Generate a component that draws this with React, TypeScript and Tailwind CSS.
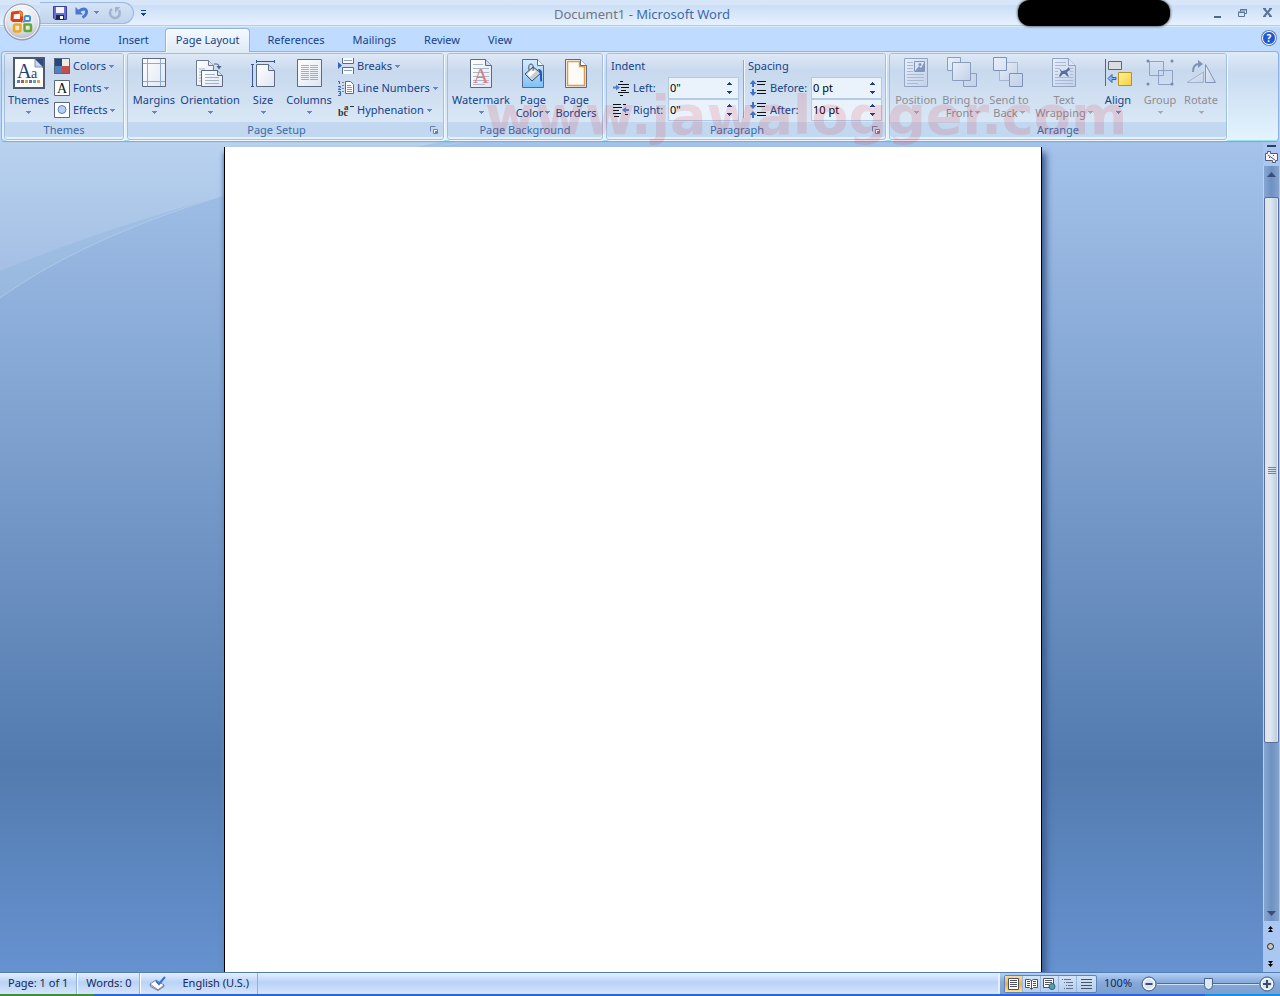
import type { ReactNode } from "react";

const viewModes = ["Print Layout", "Full Screen Reading", "Web Layout", "Outline", "Draft"] as const;

function Arrow({ className = "text-[#6788be]" }: { className?: string }) {
  return (
    <svg width="5" height="3" viewBox="0 0 5 3" className={`shrink-0 ${className}`}>
      <path d="M0 0h5v1H4v1H3v1H2V2H1V1H0z" fill="currentColor" shapeRendering="crispEdges" />
    </svg>
  );
}

/* ---------- large ribbon icons, 32x32 ---------- */

function Gradients() {
  return (
    <svg width="0" height="0" className="absolute">
      <defs>
        <linearGradient id="paper" x1="0" y1="0" x2="1" y2="1">
          <stop offset="0" stopColor="#fff" />
          <stop offset="1" stopColor="#dfe6f2" />
        </linearGradient>
        <linearGradient id="ghost" x1="0" y1="0" x2="1" y2="1">
          <stop offset="0" stopColor="#e6eef9" />
          <stop offset="1" stopColor="#c3d1e8" />
        </linearGradient>
        <linearGradient id="gold" x1="0" y1="0" x2="1" y2="1">
          <stop offset="0" stopColor="#fff3a0" />
          <stop offset="1" stopColor="#f5cf3d" />
        </linearGradient>
        <linearGradient id="sky" x1="0" y1="0" x2="0" y2="1">
          <stop offset="0" stopColor="#d5ecff" />
          <stop offset="1" stopColor="#7fc0f8" />
        </linearGradient>
        <radialGradient id="orb" cx=".5" cy=".3" r=".75">
          <stop offset="0" stopColor="#ffffff" />
          <stop offset=".6" stopColor="#dfe2ea" />
          <stop offset="1" stopColor="#a2aabd" />
        </radialGradient>
      </defs>
    </svg>
  );
}

function Icon({ children, size = 32 }: { children: ReactNode; size?: number }) {
  return (
    <svg width={size} height={size} viewBox={`0 0 ${size} ${size}`} className="shrink-0">
      {children}
    </svg>
  );
}

function ThemesIcon() {
  return (
    <Icon>
      <path d="M1 1h30v30H1z" fill="#fff" stroke="#4f5a6e" strokeWidth="2" />
      <path d="M22 2h8v9z" fill="#2b4a86" />
      <path d="M22 2v8h8z" fill="#c9d8ef" stroke="#5b6f97" strokeWidth=".7" />
      <text x="4" y="21" fontSize="20" fill="#1f4178" className="font-['Liberation_Serif',serif]">A</text>
      <text x="18" y="21" fontSize="14" fill="#1f4178" className="font-['Liberation_Serif',serif]">a</text>
      <path d="M4 23h3v3H4z" fill="#4f81bd" />
      <path d="M8 23h3v3H8z" fill="#c0504d" />
      <path d="M12 23h3v3h-3z" fill="#9bbb59" />
      <path d="M16 23h3v3h-3z" fill="#8064a2" />
      <path d="M20 23h3v3h-3z" fill="#4bacc6" />
      <path d="M24 23h3v3h-3z" fill="#f79646" />
    </Icon>
  );
}

function MarginsIcon() {
  return (
    <Icon>
      <path d="M4.500 1.500h23v28h-23z" fill="url(#paper)" stroke="#5b6b87" />
      <path d="M9.500 2v27M22.500 2v27M5 6.500h22M5 24.500h22" stroke="#8eabd6" />
    </Icon>
  );
}

function OrientationIcon() {
  return (
    <Icon>
      <path d="M2.500 3.500h12l5 5v20h-17z" fill="url(#paper)" stroke="#6b7a96" />
      <path d="M14.500 3.500v5h5" fill="#d6e0f0" stroke="#6b7a96" />
      <path d="M5 12h6M5 15h6M5 18h6M5 21h6M5 24h6" stroke="#9fb0cc" />
      <path d="M7.500 13.500h16l5 5v11h-21z" fill="url(#paper)" stroke="#5b6b87" />
      <path d="M23.500 13.500v5h5" fill="#d6e0f0" stroke="#5b6b87" />
      <path d="M11 17.500h10M11 20.500h14M11 23.500h14M11 26.500h14" stroke="#9fb0cc" />
      <path d="M20 7h3q2 0 2 3" fill="none" stroke="#4b6289" />
      <path d="M22.500 9h5L25 12.500z" fill="#4b6289" />
    </Icon>
  );
}

function SizeIcon() {
  return (
    <Icon>
      <path d="M9.500 7.500h12l6 6v16h-18z" fill="url(#paper)" stroke="#5b6b87" />
      <path d="M21.500 7.500v6h6" fill="#cfdcef" stroke="#5b6b87" />
      <path d="M9 4.500h19M9.500 3v3M27.500 3v3M5.500 7v22M4 7.500h3M4 29.500h3" stroke="#3a55a0" />
    </Icon>
  );
}

function ColumnsIcon() {
  return (
    <Icon>
      <path d="M4.500 2.500h24v27h-24z" fill="url(#paper)" stroke="#5b6b87" />
      <path
        d="M8 8.500h8M8 10.500h8M8 12.500h8M8 14.500h8M8 16.500h8M8 18.500h8M8 20.500h8M8 22.500h8M17 8.500h8M17 10.500h8M17 12.500h8M17 14.500h8M17 16.500h8M17 18.500h8M17 20.500h8M17 22.500h8"
        stroke="#a3aec2"
      />
    </Icon>
  );
}

function WatermarkIcon() {
  return (
    <Icon>
      <path d="M5.500 2.500h15l6 6v22h-21z" fill="url(#paper)" stroke="#5b6b87" />
      <path d="M20.500 2.500v6h6" fill="#cfdcef" stroke="#5b6b87" />
      <path d="M8 7.500h10M8 11.500h16M8 15.500h16M8 19.500h16M8 23.500h16M8 27.500h12" stroke="#a9b6cc" />
      <text x="8" y="26" fontSize="22" fill="#db7d7a" className="font-['Liberation_Serif',serif]">A</text>
    </Icon>
  );
}

function PageColorIcon() {
  return (
    <Icon>
      <path d="M5.500 2.500h15l6 6v22h-21z" fill="url(#sky)" stroke="#5b6b87" />
      <path d="M20.500 2.500v6h6" fill="#fff" stroke="#5b6b87" />
      <path d="m8 17 8-7 8 6-9 8z" fill="#c9cdd4" stroke="#4a4f59" />
      <path d="m10 17 6-5 3 2-6 6z" fill="#fff" />
      <path d="M12 13q-1-6 2-6t2 7" fill="none" stroke="#4a4f59" />
      <path d="M21 12q4 0 4 4v8q-2 2-2-2v-5z" fill="#2458b8" />
    </Icon>
  );
}

function PageBordersIcon() {
  return (
    <Icon>
      <path d="M5.500 2.500h15l6 6v22h-21z" fill="url(#paper)" stroke="#5b6b87" />
      <path d="M7.500 4.500h12v5h5v19h-17z" fill="#fdfbf8" stroke="#e59a45" strokeWidth="1.500" />
      <path d="M20.500 2.500v6h6" fill="#fff" stroke="#5b6b87" />
    </Icon>
  );
}

function PositionIcon() {
  return (
    <Icon>
      <path d="M4.500 1.500h23v28h-23z" fill="url(#ghost)" stroke="#93a5c4" />
      <path d="M7 5.500h6M7 8.500h6M7 11.500h6M7 14.500h6M7 17.500h17M7 20.500h17M7 23.500h17M7 26.500h11" stroke="#a9bad6" />
      <path d="M14.500 4.500h10v10h-10z" fill="#dbe5f4" stroke="#7f94b8" />
      <path d="m15 14 4-5 2 2 3-5v8z" fill="#8197bd" />
      <circle cx="20" cy="7.500" r="1.500" fill="#8197bd" />
    </Icon>
  );
}

function BringFrontIcon() {
  return (
    <Icon>
      <path d="M.500.500h13v13h-13zM16.500 16.500h13v13h-13z" fill="url(#ghost)" stroke="#8b9dbd" />
      <path d="M5.500 5.500h18v18h-18z" fill="url(#ghost)" stroke="#8b9dbd" />
    </Icon>
  );
}

function SendBackIcon() {
  return (
    <Icon>
      <path d="M6.500 5.500h18v18h-18z" fill="url(#ghost)" stroke="#a6b6d2" />
      <path d="M.500.500h13v13h-13zM16.500 16.500h13v13h-13z" fill="url(#ghost)" stroke="#7e92b5" />
    </Icon>
  );
}

function TextWrapIcon() {
  return (
    <Icon>
      <path d="M4.500 1.500h16l7 7v21h-23z" fill="url(#ghost)" stroke="#93a5c4" />
      <path d="M20.500 1.500v7h7" fill="#dbe5f4" stroke="#93a5c4" />
      <path d="M7 5.500h11M7 8.500h11M7 11.500h4M7 14.500h3M7 17.500h3M22 11.500h3M22 14.500h3M22 17.500h3M7 20.500h18M7 23.500h18M7 26.500h18" stroke="#a9bad6" />
      <path d="m11 11 3 3 4-1 3-3 1 3-3 2 2 5-2-1-2-2h-2l-3 3-1-1 2-4z" fill="#56709c" />
    </Icon>
  );
}

function AlignIcon() {
  return (
    <Icon>
      <path d="M3.500 2v27" stroke="#3f67b4" />
      <path d="M6.500 4.500h13v8h-13z" fill="#dcdde1" stroke="#62656d" />
      <path d="M16.500 15.500h13v13h-13z" fill="url(#gold)" stroke="#b8921e" />
      <path d="m6 21.500 4-4v3h4v2h-4v3z" fill="#8eb4ef" stroke="#2f61b8" />
    </Icon>
  );
}

function GroupIcon() {
  return (
    <Icon>
      <path d="M5.500 4.500h14v14h-14zM14.500 13.500h14v14h-14z" fill="none" stroke="#8da2c4" />
      <circle cx="4" cy="4" r="1.500" fill="#7388ad" />
      <circle cx="28" cy="4" r="1.500" fill="#7388ad" />
      <circle cx="4" cy="27" r="1.500" fill="#7388ad" />
      <circle cx="28" cy="27" r="1.500" fill="#7388ad" />
    </Icon>
  );
}

function RotateIcon() {
  return (
    <Icon>
      <path d="M2 25.500 18.500 15v10.500z" fill="url(#ghost)" stroke="#a3b2cb" />
      <path d="M20.500 7.500v18h10z" fill="url(#ghost)" stroke="#8296b9" />
      <path d="M8 15q0-8 6-8" fill="none" stroke="#7e93b8" strokeWidth="2" />
      <path d="m13 3 5 4-5 4z" fill="#7e93b8" />
    </Icon>
  );
}

/* ---------- small ribbon icons, 16x16 ---------- */

function ColorsIcon() {
  return (
    <Icon size={16}>
      <path d="M0 0h8v8H0z" fill="#1f497d" />
      <path d="M8 0h8v8H8z" fill="#eeece1" />
      <path d="M0 8h8v8H0z" fill="#4f81bd" />
      <path d="M8 8h8v8H8z" fill="#c0504d" />
      <path d="M.500.500h15v15H.500z" fill="none" stroke="#5c6880" />
    </Icon>
  );
}

function FontsIcon() {
  return (
    <Icon size={16}>
      <path d="M.500.500h15v15H.500z" fill="#fff" stroke="#5c6880" />
      <text x="3" y="13" fontSize="14" fill="#111" className="font-['Liberation_Serif',serif]">A</text>
    </Icon>
  );
}

function EffectsIcon() {
  return (
    <Icon size={16}>
      <path d="M.500.500h15v15H.500z" fill="#fff" stroke="#5c6880" />
      <circle cx="8" cy="7.500" r="4" fill="#b5d0f6" stroke="#5a7fc0" />
    </Icon>
  );
}

function BreaksIcon() {
  return (
    <Icon size={16}>
      <path d="M4 0h12v6H4zM4 9h12v7H4z" fill="#f6f9fe" />
      <path d="M4.500 0v5.500h11V0M4.500 16V9.500h11V16" fill="none" stroke="#5b6b87" />
      <path d="M6 2.500h8M6 12.500h8" stroke="#8ea0c0" />
      <path d="m0 4 4 3.500L0 11z" fill="#2f61c8" />
    </Icon>
  );
}

function LineNumbersIcon() {
  return (
    <Icon size={16}>
      <path d="M7.500 1.500h5l3 3v9h-8z" fill="#fff" stroke="#5b6b87" />
      <path d="M9 5.500h4M9 7.500h5M9 9.500h5M9 11.500h5" stroke="#8594b0" />
      <path d="M0 1.500h1.500V4M0 6.500h2.500v1L.500 9v.500H3M0 11.500h2.500v4H0M1 13.500h1.500" fill="none" stroke="#2f61c8" />
      <path d="M4.500 2h1v1h-1zM4.500 5h1v1h-1zM4.500 8h1v1h-1zM4.500 11h1v1h-1z" fill="#333" />
    </Icon>
  );
}

function HyphenationIcon() {
  return (
    <Icon size={16}>
      <text x="0" y="14" fontSize="10" fill="#333" className="font-['Liberation_Serif',serif] font-bold">bc</text>
      <text x="6" y="8" fontSize="9" fill="#333" className="font-['Liberation_Serif',serif] font-bold">a</text>
      <path d="M12 4.500h4" stroke="#333" />
    </Icon>
  );
}

function IndentIcon({ right = false }: { right?: boolean }) {
  return (
    <Icon size={16}>
      {right ? (
        <>
          <path d="M0 2.500h8M0 5.500h9M0 8.500h6M0 11.500h8M1 14.500h5M10 2.500h3M12 12.500h3" stroke="#111" />
          <path d="m9 8 4-3v2h3v2h-3v2z" fill="#4a7fd8" />
        </>
      ) : (
        <>
          <path d="M7 1.500h3M5 4.500h11M8 7.500h8M8 10.500h5M5 12.500h11M7 15.500h3" stroke="#111" />
          <path d="m7 7.500-4-3v2H0v2h3v2z" fill="#4a7fd8" />
        </>
      )}
    </Icon>
  );
}

function SpacingIcon({ after = false }: { after?: boolean }) {
  return (
    <Icon size={16}>
      <path d="M7 1.500h9M7 4.500h8M7 10.500h9M7 13.500h9" stroke="#111" />
      {after ? (
        <path d="M2 0h2v3h2.500L3 7-.500 3H2zM2 16h2v-3h2.500L3 9l-3.500 4H2z" fill="#4470c4" />
      ) : (
        <path d="M2 7h2V4h2.500L3 0-.500 4H2zM2 9h2v3h2.500L3 16l-3.500-4H2z" fill="#4470c4" />
      )}
    </Icon>
  );
}

/* ---------- ribbon pieces ---------- */

type BigButtonProps = {
  label: string;
  second?: string;
  icon: ReactNode;
  width: string;
  arrow?: boolean;
  disabled?: boolean;
};

function BigButton({ label, second, icon, width, arrow = true, disabled = false }: BigButtonProps) {
  const arrowColor = disabled ? "text-[#a9a9b4]" : "text-[#6788be]";
  return (
    <button
      type="button"
      disabled={disabled}
      className={`flex shrink-0 flex-col items-center whitespace-nowrap pt-[3px] ${width} ${disabled ? "text-[#8d8d95]" : "text-[#15428b]"}`}
    >
      {icon}
      <span className="mt-1 flex h-[13px] items-center justify-center leading-[13px]">{label}</span>
      <span className="flex h-[13px] items-center justify-center gap-0.5 leading-[13px]">
        {second}
        {arrow && <Arrow className={arrowColor} />}
      </span>
    </button>
  );
}

function SmallButton({ label, icon }: { label: string; icon: ReactNode }) {
  return (
    <button type="button" className="flex h-[22px] items-center gap-[3px] whitespace-nowrap text-[#15428b]">
      {icon}
      {label}
      <Arrow />
    </button>
  );
}

type GroupProps = { title: string; launcher?: boolean; width: string; children: ReactNode };

function Group({ title, launcher = false, width, children }: GroupProps) {
  return (
    <section
      aria-label={title}
      className={`flex shrink-0 flex-col rounded-[3px] border border-[#a3bfde] shadow-[1px_1px_0_#f2f8fe] ${width}`}
    >
      <div className="flex h-[68px] rounded-t-[2px] bg-linear-to-b from-[#dee8f5] via-[#c8d9ee] via-25% to-[#d9e7f5]">
        {children}
      </div>
      <div className="flex h-[15px] items-center rounded-b-[2px] bg-[#c1d8f0] pt-px text-[#3e6aaa]">
        <span className="flex-1 text-center">{title}</span>
        {launcher && (
          <button type="button" aria-label={`${title} settings`} className="w-[18px] pl-[5px]">
            <svg width="8" height="8" viewBox="0 0 8 8" fill="none" stroke="#6680ab">
              <path d="M.500 5.500v-5h5" />
              <path d="M3.500 3.500h4v4h-4z" fill="#fff" />
              <path d="M5 5h2v2H5z" fill="#6680ab" stroke="none" />
            </svg>
          </button>
        )}
      </div>
    </section>
  );
}

type SpinFieldProps = { id: string; label: string; value: string; icon: ReactNode; labelWidth: string };

function SpinField({ id, label, value, icon, labelWidth }: SpinFieldProps) {
  return (
    <div className="flex h-[22px] items-center">
      {icon}
      <label htmlFor={id} className={`ml-1 shrink-0 text-[#15428b] ${labelWidth}`}>
        {label}
      </label>
      <div className="flex h-[22px] w-[71px] border border-[#b3cae7] bg-[#eaf3fc]">
        <input id={id} type="text" defaultValue={value} className="w-0 flex-1 bg-transparent pl-px text-black outline-none" />
        <div className="flex w-[18px] flex-col items-center justify-center gap-1.5 text-[#1f3f7f]">
          <button type="button" aria-label={`Increase ${label}`} className="rotate-180">
            <Arrow className="block" />
          </button>
          <button type="button" aria-label={`Decrease ${label}`}>
            <Arrow className="block" />
          </button>
        </div>
      </div>
    </div>
  );
}

function Ribbon() {
  return (
    <div className="relative z-10 mx-px flex h-[90px] gap-[3px] rounded-[4px] border border-[#8db2e3] border-b-[#9be0ef] bg-linear-to-b from-[#dfeaf6] via-[#c9dbf0] via-25% to-[#e3f4ff] px-0.5 pt-px shadow-[0_1px_1px_#8ba5c8]">
      <Group title="Themes" width="w-[120px]">
        <BigButton label="Themes" icon={<ThemesIcon />} width="w-[47px]" />
        <div className="ml-0.5 flex flex-col pt-px">
          <SmallButton label="Colors" icon={<ColorsIcon />} />
          <SmallButton label="Fonts" icon={<FontsIcon />} />
          <SmallButton label="Effects" icon={<EffectsIcon />} />
        </div>
      </Group>
      <Group title="Page Setup" launcher width="w-[317px]">
        <BigButton label="Margins" icon={<MarginsIcon />} width="w-[52px]" />
        <BigButton label="Orientation" icon={<OrientationIcon />} width="w-[60px]" />
        <BigButton label="Size" icon={<SizeIcon />} width="w-[46px]" />
        <BigButton label="Columns" icon={<ColumnsIcon />} width="w-[46px]" />
        <div className="ml-1.5 flex flex-col pt-px">
          <SmallButton label="Breaks" icon={<BreaksIcon />} />
          <SmallButton label="Line Numbers" icon={<LineNumbersIcon />} />
          <SmallButton label="Hyphenation" icon={<HyphenationIcon />} />
        </div>
      </Group>
      <Group title="Page Background" width="w-[156px]">
        <BigButton label="Watermark" icon={<WatermarkIcon />} width="w-[66px]" />
        <BigButton label="Page" second="Color" icon={<PageColorIcon />} width="w-[38px]" />
        <BigButton label="Page" second="Borders" icon={<PageBordersIcon />} width="w-[48px]" arrow={false} />
      </Group>
      <Group title="Paragraph" launcher width="w-[280px]">
        <div className="flex flex-col pl-1 pt-px">
          <h3 className="flex h-[22px] items-center text-[#15428b]">Indent</h3>
          <div className="pl-0.5">
            <SpinField id="indent-left" label="Left:" value={'0"'} icon={<IndentIcon />} labelWidth="w-[35px]" />
            <SpinField id="indent-right" label="Right:" value={'0"'} icon={<IndentIcon right />} labelWidth="w-[35px]" />
          </div>
        </div>
        <div className="ml-1 mr-[3px] mb-1 mt-1.5 w-0.5 border-l border-[#8ba9d3] bg-[#eef5fc]" />
        <div className="flex flex-col pt-px">
          <h3 className="flex h-[22px] items-center text-[#15428b]">Spacing</h3>
          <div className="pl-0.5">
            <SpinField id="space-before" label="Before:" value="0 pt" icon={<SpacingIcon />} labelWidth="w-[41px]" />
            <SpinField id="space-after" label="After:" value="10 pt" icon={<SpacingIcon after />} labelWidth="w-[41px]" />
          </div>
        </div>
      </Group>
      <Group title="Arrange" width="w-[338px]">
        <BigButton label="Position" icon={<PositionIcon />} width="w-[52px]" disabled />
        <BigButton label="Bring to" second="Front" icon={<BringFrontIcon />} width="w-[42px]" disabled />
        <BigButton label="Send to" second="Back" icon={<SendBackIcon />} width="w-[50px]" disabled />
        <BigButton label="Text" second="Wrapping" icon={<TextWrapIcon />} width="w-[60px]" disabled />
        <BigButton label="Align" icon={<AlignIcon />} width="w-[48px]" />
        <BigButton label="Group" icon={<GroupIcon />} width="w-[36px]" disabled />
        <BigButton label="Rotate" icon={<RotateIcon />} width="w-[46px]" disabled />
      </Group>
      <span className="pointer-events-none absolute left-[38%] top-[37px] -ml-0.5 font-['DejaVu_Sans',sans-serif] text-[54px] font-bold leading-[54px] text-[#e0313b]/15">
        www.jawalogger.com
      </span>
    </div>
  );
}

/* ---------- window chrome ---------- */

function OfficeButton() {
  return (
    <button type="button" aria-label="Office Button" className="absolute left-[3px] top-[3px] z-20 rounded-full">
      <svg width="38" height="38" viewBox="0 0 38 38">
        <circle cx="19" cy="19" r="18" fill="url(#orb)" stroke="#8994a8" />
        <circle cx="19" cy="19" r="16.500" fill="none" stroke="#fff" strokeOpacity=".8" />
        <g fill="none" strokeLinejoin="round">
          <path d="m9.500 10 8-1 1 1v7l-1 .500H10l-1-1z" stroke="#d9420f" strokeWidth="3" />
          <path d="M16 9.500h2.500v4" stroke="#f08a3c" strokeWidth="2" />
          <path d="M21.500 14.500q0-1.500 1.500-1.500h2.500q1.500 0 1.500 1.500v2q0 1.500-1.500 1.500h-4z" stroke="#3d8fdc" strokeWidth="2" />
          <path d="M17 21.500h-4.500q-1.500 0-1.500 1.500v4q0 1.500 1.500 1.500H16q1.500 0 1.500-1.500v-5.500z" stroke="#f3a713" strokeWidth="2.500" />
          <path d="M21.500 21.500H27q1 0 1 1V27q0 1-1 1h-4.500q-1 0-1-1z" stroke="#65a92b" strokeWidth="2.500" />
        </g>
        <path d="M18 18h1.500v1.500H18z" fill="#d9420f" />
        <path d="M20 18h1.500v1.500H20z" fill="#3d8fdc" />
      </svg>
    </button>
  );
}

function TitleBar() {
  return (
    <header className="relative flex h-[26px] items-center border-b border-[#a9d0ee] bg-linear-to-b from-[#d7e6f9] from-20% via-[#cadef7] via-20% to-[#e6f1fd]">
      <div className="ml-10 flex h-[22px] w-[94px] items-center rounded-r-full border border-l-0 border-[#9bb8de] bg-linear-to-b from-[#d5e3f5] to-[#c0d4ee] pl-[13px]">
        <button type="button" aria-label="Save">
          <svg width="14" height="14" viewBox="0 0 14 14">
            <path d="M.500.500h13v13H2L.500 12z" fill="#6770cf" stroke="#3b3f96" />
            <path d="M3 1h8v6H3z" fill="#f3f5fb" />
            <path d="M3 9h8v5H3z" fill="#22244d" />
            <path d="M7 10h3v3H7z" fill="#fff" />
          </svg>
        </button>
        <button type="button" aria-label="Undo" className="ml-2">
          <svg width="14" height="14" viewBox="0 0 14 14">
            <path d="M4 5q6-4 7.500 0 .5 4-4 6.500" fill="none" stroke="#4778d2" strokeWidth="3" />
            <path d="M.500 1v7.500H8z" fill="#4778d2" />
          </svg>
        </button>
        <button type="button" aria-label="Undo history" className="ml-1 px-px">
          <Arrow />
        </button>
        <button type="button" aria-label="Redo" className="ml-2">
          <svg width="14" height="14" viewBox="0 0 14 14">
            <path d="M4 3Q1 5 2.500 9q1.500 3 4.500 3t4.500-3Q12 6 11 4" fill="none" stroke="#a2b3cd" strokeWidth="2.500" />
            <path d="M7 1v6l5.500-6z" fill="#a2b3cd" />
          </svg>
        </button>
      </div>
      <button type="button" aria-label="Customize Quick Access Toolbar" className="ml-[7px] flex flex-col items-center gap-0.5">
        <span className="h-px w-[5px] bg-[#15428b]" />
        <Arrow className="text-[#15428b]" />
      </button>
      <h1 className="flex-1 whitespace-pre pr-1 pt-0.5 text-center text-[13px] leading-[22px] text-[#3e6aaa]">
        <span className="text-[#71767f]">Document1</span> - Microsoft Word
      </h1>
      <div className="absolute left-[80%] top-0 z-20 -ml-1.5 h-[26px] w-[152px] rounded-[12px] bg-black shadow-[0_0_3px_#000]" />
      <div className="flex w-[138px] items-center justify-end pr-2">
        <button type="button" aria-label="Minimize" className="mr-[17px] mt-2 h-0.5 w-[7px] bg-[#4f678c]" />
        <button type="button" aria-label="Restore" className="mr-4">
          <svg width="9" height="8" viewBox="0 0 9 8" fill="none" stroke="#5d7396">
            <path d="M2.500 2.500V.500h6v4h-2M2 1h7M.500 3.500h6v4h-6zM0 3h7" />
          </svg>
        </button>
        <button type="button" aria-label="Close">
          <svg width="9" height="9" viewBox="0 0 9 9" stroke="#5d7396" strokeWidth="2">
            <path d="m1 .500 7 8m0-8-7 8" />
            <path d="M0 .500h3M6 .500h3M0 8.500h3M6 8.500h3" strokeWidth="1" />
          </svg>
        </button>
      </div>
    </header>
  );
}

function Tabs() {
  const tabs = ["Home", "Insert", "Page Layout", "References", "Mailings", "Review", "View"];
  return (
    <nav className="flex h-[25px] items-end border-t border-[#d9eafd] pl-[45px] pr-1">
      {tabs.map((tab) =>
        tab === "Page Layout" ? (
          <button
            key={tab}
            type="button"
            className="z-20 -mb-px ml-0.5 mr-[3px] h-6 rounded-t-[4px] border border-b-0 border-[#8db2e3] bg-linear-to-b from-[#f4f9ff] to-[#dfeaf6] px-2.5 text-[#15428b] shadow-[inset_1px_1px_0_#fff]"
          >
            {tab}
          </button>
        ) : (
          <button key={tab} type="button" className="h-[22px] px-3.5 text-[#15428b]">
            {tab}
          </button>
        ),
      )}
      <button
        type="button"
        aria-label="Help"
        className="mb-1.5 ml-auto flex size-[14px] items-center justify-center rounded-full border border-white bg-[#1f58cf] text-[10px] font-bold text-white shadow-[0_0_0_1px_#6b87b9]"
      >
        ?
      </button>
    </nav>
  );
}

function ScrollBar() {
  return (
    <div className="relative flex w-[17px] shrink-0 flex-col items-center bg-[#a9c7f0] pt-1">
      <div className="h-0.5 w-[9px] bg-[#2f3d5e]" />
      <button type="button" aria-label="View Ruler" className="mb-[3px] mt-1">
        <svg width="13" height="12" viewBox="0 0 13 12" fill="#f5f5fa" stroke="#535b70">
          <path d="M.500 2.500h2v-2h3v2h7v7h-2v2h-3v-2h-7z" />
          <path d="m3 4 7 5M4 7l1-1M8 5l1-1" />
        </svg>
      </button>
      <div className="flex w-full flex-1 flex-col border-l border-r border-l-[#b9d2f4] border-r-[#a9c7f0] bg-linear-to-r from-[#87a6d2] via-[#6f92c3] to-[#86a3cc]">
        <button type="button" aria-label="Scroll up" className="flex h-[31px] justify-center pt-1.5">
          <svg width="9" height="5" viewBox="0 0 9 5">
            <path d="M0 5h9L4.500 0z" fill="#3d4d79" />
          </svg>
        </button>
        <div className="flex flex-[546] items-center justify-center rounded-[2px] border border-[#5a6f9c] bg-linear-to-r from-[#e6e3e9] via-[#dfe8ef] via-40% to-[#b8cadf] shadow-[inset_-1px_0_0_#dce9f6]">
          <div className="flex w-2 flex-col gap-px">
            <span className="h-px bg-[#7b8290]" />
            <span className="h-px bg-[#7b8290]" />
            <span className="h-px bg-[#7b8290]" />
            <span className="h-px bg-[#7b8290]" />
          </div>
        </div>
        <div className="flex-[160]" />
        <button type="button" aria-label="Scroll down" className="flex h-[18px] justify-center pt-2">
          <svg width="9" height="5" viewBox="0 0 9 5">
            <path d="M0 0h9L4.500 5z" fill="#3d4d79" />
          </svg>
        </button>
      </div>
      <div className="flex h-[51px] flex-col items-center justify-around pr-0.5">
        <button type="button" aria-label="Previous Page">
          <svg width="5" height="6" viewBox="0 0 5 6">
            <path d="M0 3h5L2.500 0zM0 6h5L2.500 3z" />
          </svg>
        </button>
        <button type="button" aria-label="Select Browse Object" className="size-[7px] rounded-full border border-[#222] bg-[#c9c9bd]" />
        <button type="button" aria-label="Next Page">
          <svg width="5" height="6" viewBox="0 0 5 6">
            <path d="M0 0h5L2.500 3zM0 3h5L2.500 6z" />
          </svg>
        </button>
      </div>
    </div>
  );
}

function Workspace() {
  return (
    <main className="flex flex-1 bg-linear-to-b from-[#a5c3eb] via-[#537baf] via-75% to-[#6692d0]">
      <div className="relative flex flex-1 justify-center overflow-hidden pl-0.5 pt-1.5">
        <svg className="absolute left-0 top-0" width="560" height="160" viewBox="0 0 560 160">
          <defs>
            <linearGradient id="swoosh" x1="0" y1="0" x2="0" y2="1">
              <stop offset="0" stopColor="#c2d8f1" stopOpacity=".7" />
              <stop offset="1" stopColor="#b2c9e9" stopOpacity=".55" />
            </linearGradient>
          </defs>
          <path d="M0 0h445Q180 57 0 130z" fill="url(#swoosh)" />
          <path d="M0 130Q180 57 445 0h25Q150 50 0 157z" fill="#a9c8e6" fillOpacity=".35" />
          <path d="M0 157Q150 50 470 0" fill="none" stroke="#b5cfec" strokeOpacity=".7" />
        </svg>
        <article className="relative w-full max-w-[818px] border-x border-black bg-white shadow-[4px_6px_7px_#3b5b8c,-1px_6px_4px_#6b8fc0]" />
      </div>
      <ScrollBar />
    </main>
  );
}

function ViewIcon({ mode }: { mode: string }) {
  return (
    <svg width="13" height="12" viewBox="0 0 13 12" fill="none" stroke="#4d545f">
      {mode === "Print Layout" && (
        <>
          <path d="M1.500.500h10v11h-10z" fill="#fff" />
          <path d="M3 2.500h7M3 4.500h7M3 6.500h7M3 8.500h7" />
        </>
      )}
      {mode === "Full Screen Reading" && (
        <>
          <path d="M.500 1.500h4l2 1 2-1h4v8h-4l-2 2-2-2h-4z" fill="#fff" />
          <path d="M6.500 2v9M2 3.500h3M2 5.500h3M2 7.500h3M8 3.500h3M8 5.500h3M8 7.500h3" />
        </>
      )}
      {mode === "Web Layout" && (
        <>
          <path d="M.500.500h10v9h-10z" fill="#fff" />
          <path d="M2 2.500h7M2 4.500h7M2 6.500h4" />
          <circle cx="9" cy="8.500" r="3" fill="#4b9dc6" stroke="#35617f" />
          <path d="M8 8h2v2H8z" fill="#5cab5e" stroke="none" />
        </>
      )}
      {mode === "Outline" && <path d="M1 1.500h1M3 1.500h7M3 4.500h1M5 4.500h7M5 7.500h1M7 7.500h5M3 10.500h1M5 10.500h7" stroke="#667185" />}
      {mode === "Draft" && <path d="M1 1.500h11M1 4.500h11M1 7.500h11M1 10.500h11" />}
    </svg>
  );
}

function ZoomButton({ label, plus = false }: { label: string; plus?: boolean }) {
  return (
    <button type="button" aria-label={label} className="shrink-0">
      <svg width="16" height="16" viewBox="0 0 16 16">
        <circle cx="8" cy="8" r="7" fill="#d5e4f7" stroke="#42587e" />
        <circle cx="8" cy="8" r="5.500" fill="none" stroke="#fff" />
        <path d={plus ? "M4 8h8M8 4v8" : "M4.500 8h7"} stroke="#3e4c66" strokeWidth="2" />
      </svg>
    </button>
  );
}

function StatusBar() {
  return (
    <footer className="flex h-[22px] border-t border-[#567db1] bg-linear-to-b from-[#e3efff] via-[#b9d3f6] via-45% to-[#d6e5fa] text-[#15285c]">
      <div className="flex items-center border-r border-[#8fb0dd] px-2">Page: 1 of 1</div>
      <div className="flex items-center border-l border-r border-l-white border-r-[#8fb0dd] px-2">Words: 0</div>
      <div className="flex items-center border-l border-white pl-2">
        <button type="button" aria-label="Proofing">
          <svg width="17" height="15" viewBox="0 0 17 15">
            <path d="m1 8 6-4 8 5-6 5z" fill="#fff" stroke="#75839f" />
            <path d="m1 8 .5 2.500L9 14.500l6-4V9" fill="none" stroke="#75839f" />
            <path d="m7 5 3 3 6-7" fill="none" stroke="#3f6fc9" strokeWidth="2" />
          </svg>
        </button>
      </div>
      <button type="button" className="ml-2 border-r border-[#8fb0dd] px-2">English (U.S.)</button>
      <div className="ml-auto flex items-center border-l-2 border-white/80 bg-linear-to-b from-[#b4d0f7] via-[#86a9d9] via-45% to-[#7b9fd0] pl-1 pr-[5px]">
        <div className="flex h-[18px] rounded-[2px] border border-[#5f83b9] bg-linear-to-b from-[#d3e3f8] to-[#b4cdee] pr-px">
          {viewModes.map((mode) => (
            <button
              key={mode}
              type="button"
              aria-label={mode}
              className={`flex w-[18px] items-center justify-center border-r border-[#9bb6dc] last:border-r-0 ${mode === "Print Layout" ? "bg-linear-to-b from-[#f8d9a4] via-[#f0ad3f] to-[#fce18a]" : ""}`}
            >
              <ViewIcon mode={mode} />
            </button>
          ))}
        </div>
        <button type="button" className="ml-[7px] w-[37px] text-left">100%</button>
        <ZoomButton label="Zoom Out" />
        <input
          type="range"
          aria-label="Zoom"
          defaultValue={50}
          className="h-4 w-[102px] appearance-none bg-[linear-gradient(#4c6da3,#4c6da3),linear-gradient(#d2e2f8,#d2e2f8)] bg-[length:100%_1px,100%_1px] bg-[position:0_7px,0_8px] bg-no-repeat [&::-webkit-slider-thumb]:h-3 [&::-webkit-slider-thumb]:w-[9px] [&::-webkit-slider-thumb]:appearance-none [&::-webkit-slider-thumb]:rounded-b-[5px] [&::-webkit-slider-thumb]:border [&::-webkit-slider-thumb]:border-[#4c6288] [&::-webkit-slider-thumb]:bg-[#dbe8f8]"
        />
        <ZoomButton label="Zoom In" plus />
      </div>
    </footer>
  );
}

export default function App() {
  return (
    <div className="relative flex min-h-screen flex-col overflow-x-hidden bg-[#bfdbff] font-['Noto_Sans',sans-serif] text-[11px]">
      <Gradients />
      <OfficeButton />
      <TitleBar />
      <Tabs />
      <Ribbon />
      <Workspace />
      <StatusBar />
      <div className="flex h-0.5 bg-[#2b67d9]">
        <div className="w-[94px] rounded-r bg-[#3c8f3a]" />
        <div className="ml-auto w-[75px] bg-[#1590e6]" />
      </div>
    </div>
  );
}
